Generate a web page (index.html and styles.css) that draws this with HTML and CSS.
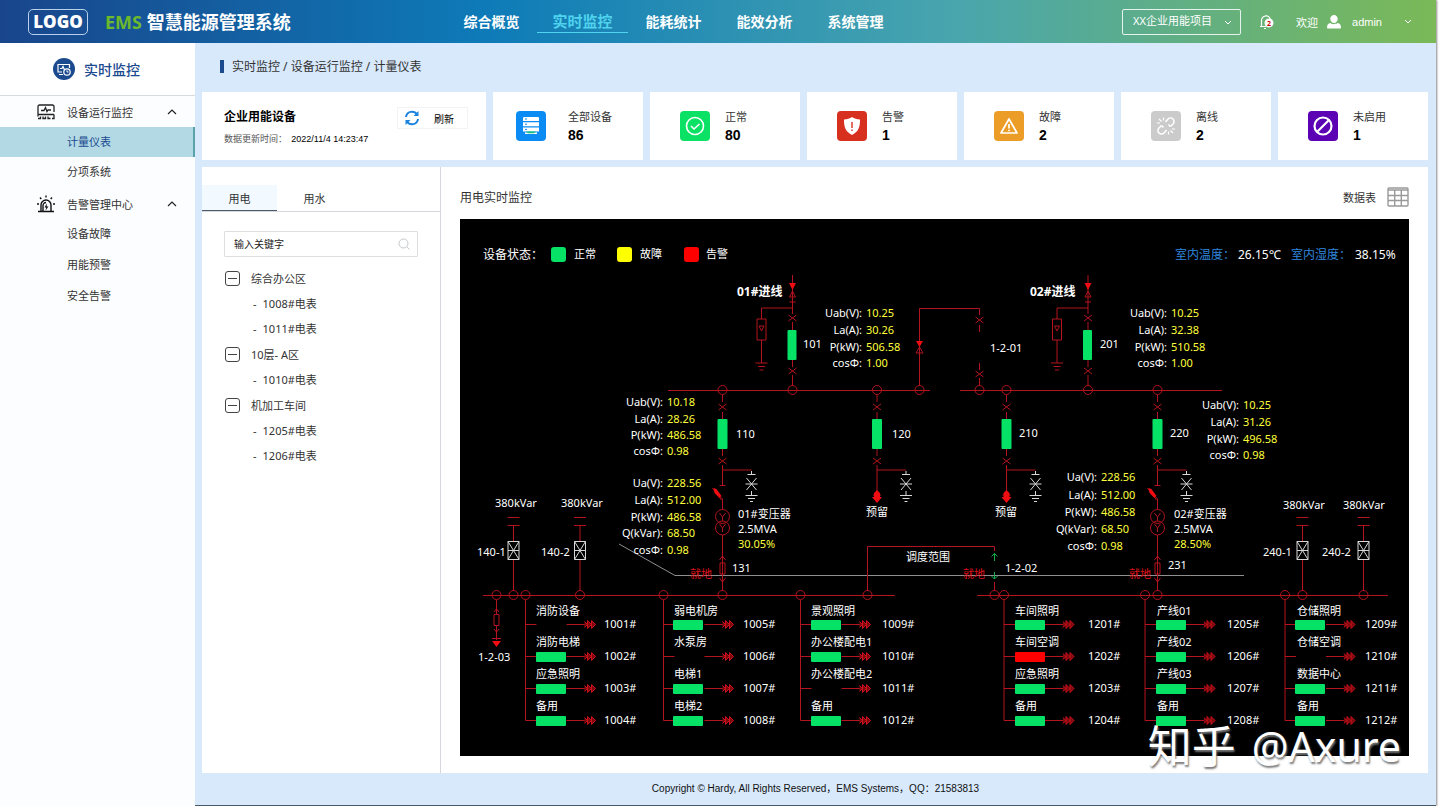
FILE: index.html
```html
<!DOCTYPE html>
<html lang="zh-CN">

    <head>
        <meta charset="UTF-8">
        <title>EMS 智慧能源管理系统</title>
        <link rel="stylesheet" href="styles.css">
    </head>
    <body>
        <div class="page">
            <!-- 顶部导航 -->
            <header class="header">
                <div class="brand">
                    <span class="logo">LOGO</span>
                    <h1><span class="ems">EMS</span> 智慧能源管理系统</h1>
                </div>
                <nav class="nav">
                    <a href="#">综合概览</a>
                    <a href="#" class="active">实时监控</a>
                    <a href="#">能耗统计</a>
                    <a href="#">能效分析</a>
                    <a href="#">系统管理</a>
                </nav>
                <div class="tools">
                    <div class="project">
                        <select aria-label="项目">
                            <option>XX企业用能项目</option>
                        </select>
                        <svg class="chevron" viewBox="0 0 8 6"><path d="M1 1l3 3 3-3" /></svg>
                    </div>
                    <button class="bell" aria-label="消息">
                        <svg width="16" height="16" viewBox="0 0 16 16">
                            <path d="M1 12.500h6M2.500 12.500V7a4.500 4.500 0 0 1 9-1M7 2.500V1M5 14.500h2" fill="none" stroke="#fff" stroke-width="1.200" />
                            <circle cx="10" cy="9" r="4.500" fill="#fff" />
                        </svg>
                        <span class="badge">2</span>
                    </button>
                    <span class="welcome">欢迎</span>
                    <svg class="user" viewBox="0 0 14 14"><path d="M7 0a3.700 3.700 0 0 1 3.700 4C10.700 6.300 9 8 7 8S3.300 6.300 3.300 4A3.700 3.700 0 0 1 7 0zM3.500 8C5 9.600 9 9.600 10.500 8 13 8.500 14 10 14 12.500c0 .7-.5 1-1 1H1c-.5 0-1-.3-1-1C0 10 1 8.500 3.500 8z" fill="#fff" /></svg>
                    <button class="admin">admin
                        <svg class="chevron" viewBox="0 0 8 6"><path d="M1 1l3 3 3-3" /></svg>
                    </button>
                </div>
            </header>

            <div class="body">
                <!-- 左侧菜单 -->
                <aside class="sidebar">
                    <h2>
                        <svg width="22" height="22" viewBox="0 0 22 22">
                            <circle cx="11" cy="11" r="11" fill="#1c4a8f" />
                            <path d="M9 14H5V6.500h11.500V10M6 16.500h4M7 10.500h2l1-2 1.500 3.500" fill="none" stroke="#fff" stroke-width="1.200" />
                            <circle cx="14" cy="14" r="3.200" fill="none" stroke="#fff" stroke-width="1.200" />
                            <path d="M14 12.300V14h1.500" fill="none" stroke="#fff" />
                        </svg>
                        实时监控
                    </h2>
                    <ul class="menu">
                        <li class="group">
                            <svg width="18" height="16" viewBox="0 0 18 16" fill="none" stroke="#222" stroke-width="1.300">
                                <path d="M17 8V2.500a1.500 1.500 0 0 0-1.500-1.500h-13A1.500 1.500 0 0 0 1 2.500v10M1 10.500h16M4 6.500h3l1.500-3 1.500 4 1-1.500h3M1 14.500h2.500v-2M6 12.500v2h2.500v-2M11 12.500v2h2.500M17 10.500v4h-2" />
                            </svg>
                            <a href="#">设备运行监控</a>
                            <svg class="arrow" viewBox="0 0 10 6"><path d="M1 5l4-4 4 4" /></svg>
                        </li>
                        <li class="item active"><a href="#">计量仪表</a></li>
                        <li class="item"><a href="#">分项系统</a></li>
                        <li class="group">
                            <svg width="18" height="18" viewBox="0 0 18 18" fill="none" stroke="#111" stroke-width="1.400">
                                <path d="M1 16.500h16M4 16V10a5 5 0 0 1 10 0v6M6 16v-5.500a3 3 0 0 1 3-3M9 .500v2M3 2.500l1.300 1.500M15 2.500l-1.300 1.500M0 9h2M16 9h2" />
                                <path d="M9.800 8.500L7.500 12.500h1.700L8.500 15.500l3-4H9.700z" fill="#111" stroke="none" />
                            </svg>
                            <a href="#">告警管理中心</a>
                            <svg class="arrow" viewBox="0 0 10 6"><path d="M1 5l4-4 4 4" /></svg>
                        </li>
                        <li class="item"><a href="#">设备故障</a></li>
                        <li class="item"><a href="#">用能预警</a></li>
                        <li class="item"><a href="#">安全告警</a></li>
                    </ul>
                </aside>

                <main class="content">
                    <p class="crumb">实时监控 / 设备运行监控 / 计量仪表</p>

                    <!-- 设备统计 -->
                    <section class="cards">
                        <div class="card summary">
                            <div>
                                <h3>企业用能设备</h3>
                                <p>数据更新时间： <time>2022/11/4 14:23:47</time></p>
                            </div>
                            <button class="refresh">
                                <svg width="16" height="16" viewBox="0 0 16 16" fill="none" stroke="#1b83dd" stroke-width="2">
                                    <path d="M2 7a6 6 0 0 1 11-2.500M14 9A6 6 0 0 1 3 11.500" />
                                    <path d="M14.500 1v5h-5zM1.500 15v-5h5z" fill="#1b83dd" stroke="none" />
                                </svg>
                                刷新
                            </button>
                        </div>
                        <div class="card stat total">
                            <svg class="icon blue" viewBox="0 0 30 30">
                                <path d="M8 6h14a1 1 0 0 1 1 1v3H7V7a1 1 0 0 1 1-1zM7 11.200h16v4H7zM7 16.400h16v4H7zM9 21.600h12v1.400H9z" fill="#fff" />
                                <path d="M9 8h2M9 13.200h2M9 18.400h2" stroke="#0b8cf5" />
                                <path d="M10 20.500h10l-2 1.700h-6z" fill="#16c47c" />
                            </svg>
                            <dl><dt>全部设备</dt><dd>86</dd></dl>
                        </div>
                        <div class="card stat">
                            <svg class="icon green" viewBox="0 0 30 30" fill="none" stroke="#fff" stroke-width="1.600">
                                <circle cx="15" cy="15" r="8.500" /><path d="M11 15l3 3 5.500-5" />
                            </svg>
                            <dl><dt>正常</dt><dd>80</dd></dl>
                        </div>
                        <div class="card stat">
                            <svg class="icon red" viewBox="0 0 30 30">
                                <path d="M15 6c2 1.500 5 2.500 8 2.500 0 7-1 12-8 15.500-7-3.500-8-8.500-8-15.500 3 0 6-1 8-2.500z" fill="#fff" />
                                <path d="M15 11v6M15 18.500v1.500" stroke="#d7301e" stroke-width="1.400" />
                            </svg>
                            <dl><dt>告警</dt><dd>1</dd></dl>
                        </div>
                        <div class="card stat">
                            <svg class="icon orange" viewBox="0 0 30 30" fill="none" stroke="#fff" stroke-width="1.700">
                                <path d="M15 8l8 14H7zM15 13v4.500M15 18.800v1.500" stroke-linejoin="round" />
                            </svg>
                            <dl><dt>故障</dt><dd>2</dd></dl>
                        </div>
                        <div class="card stat">
                            <svg class="icon gray" viewBox="0 0 30 30" fill="none" stroke="#fff" stroke-width="1.600">
                                <path d="M14.500 11l2.500-3a3.500 3.500 0 0 1 5 5l-2.500 2.500M15.500 19L13 22a3.500 3.500 0 0 1-5-5l2.500-2.500M10.500 14.500l2 2M19.500 15.500l-2-2" />
                                <path d="M6 12h3M8 8l2.500 2.500M12.500 6.500v3M17.500 20.500v3M19.500 19.500l2.500 2.500M21 18h3" stroke-width="1.200" />
                            </svg>
                            <dl><dt>离线</dt><dd>2</dd></dl>
                        </div>
                        <div class="card stat">
                            <svg class="icon purple" viewBox="0 0 30 30" fill="none" stroke="#fff" stroke-width="2.200">
                                <circle cx="15" cy="15" r="8.500" /><path d="M9.500 20.500L20.500 9.500" />
                            </svg>
                            <dl><dt>未启用</dt><dd>1</dd></dl>
                        </div>
                    </section>

                    <section class="panel">
                        <!-- 电表树 -->
                        <div class="meters">
                            <div class="tabs">
                                <button class="active">用电</button>
                                <button>用水</button>
                            </div>
                            <div class="search">
                                <input type="text" placeholder="输入关键字" aria-label="输入关键字">
                                <svg width="12" height="12" viewBox="0 0 12 12" fill="none" stroke="#c4c8cc"><circle cx="5.500" cy="5.500" r="4.500" /><path d="M9 9l2.500 2.500" /></svg>
                            </div>
                            <ul class="tree">
                                <li class="branch"><i></i>综合办公区</li>
                                <li>1008#电表</li>
                                <li>1011#电表</li>
                                <li class="branch"><i></i>10层- A区</li>
                                <li>1010#电表</li>
                                <li class="branch"><i></i>机加工车间</li>
                                <li>1205#电表</li>
                                <li>1206#电表</li>
                            </ul>
                        </div>

                        <!-- 一次接线图 -->
                        <div class="monitor">
                            <div class="monitor-head">
                                <h3>用电实时监控</h3>
                                <a href="#">数据表
                                    <svg width="22" height="20" viewBox="0 0 22 20" fill="none" stroke="#999" stroke-width="1.400"><rect x="1" y="1" width="20" height="18" rx="1" /><path d="M1 3h20M1 8.500h20M1 13.500h20M7.700 3v16M14.300 3v16" /></svg>
                                </a>
                            </div>
                            <svg class="diagram" viewBox="460 219 949 537">
                                <defs>
                                    <path id="x" d="M-4-3L4 3M-4 3L4-3" />
                                    <circle id="node" r="4.500" />
                                    <!-- 进线 -->
                                    <g id="incoming">
                                        <path d="M0 275V314M-3 302H3M0 308H-31V319M-35.500 319h9v21h-9zM-31 340V363M-37 363h12M-34.500 366.500h7M-33 370h4M-33.500 326h5l-2.500 5zM0 322V330M0 360V367M0 375V386M-3 297L0 291 3 297z" />
                                        <path class="solid" d="M-3.500 283h7L0 290z" />
                                        <use href="#x" y="318" /><use href="#x" y="371" /><use href="#node" y="390" />
                                        <rect class="on" x="-5" y="330" width="9" height="30" rx="1" />
                                    </g>
                                    <!-- 高压出线 -->
                                    <g id="outgoing">
                                        <path d="M0 395V402M0 412V419M0 449V456M0 465V485M0 470H29" />
                                        <use href="#x" y="407" /><use href="#x" y="461" /><use href="#node" y="390" />
                                        <rect class="on" x="-5" y="419" width="10" height="30" rx="1" />
                                        <path class="white" d="M29 471V474M25 474.500h8M24 478L34 490M34 478L24 490M23 484h12M29 491V495M23 495.500h12M25.500 498.500h7M27.500 501.500h3" />
                                    </g>
                                    <g id="spare">
                                        <path d="M0 485V494M-4 495H4M-4 498H4" />
                                        <path class="solid" d="M-3 493L0 490 3 493V497H5L0 503-5 497H-3z" />
                                    </g>
                                    <!-- 变压器 -->
                                    <g id="transformer">
                                        <path d="M-3 485.500H3M0 509V499L-2 497M-10 488L-1 500M0 535V563M-3 560L0 556 3 560M-2.500 563h5v11h-5zM0 563V591M-3 578L0 582 3 578M0 517V521M-3 513L0 517 3 513M0 528V532M-3 524L0 528 3 524" />
                                        <path class="solid" d="M-9 488L-6 489-1 496-3 498-8 493z" />
                                        <circle cy="516.500" r="7" /><circle cy="528" r="7" />
                                        <use href="#node" y="595" />
                                    </g>
                                    <!-- 电容器 -->
                                    <g id="capacitor">
                                        <path d="M-6 517.500H6M-6 525.500H6M0 526V541M0 560V591" />
                                        <path class="white" d="M-5.500 541.500h11v18h-11zM-5.500 541.500l11 18M5.500 541.500l-11 18M-5.500 550.500h11" />
                                        <use href="#node" y="595" />
                                    </g>
                                    <g id="load">
                                        <path d="M0 0H11M41 0H60" />
                                        <path class="cable" d="M59-3L62 0 59 3M62-4V4L66 0zM66-4V4L70 0z" />
                                    </g>
                                    <!-- 低压馈线 -->
                                    <g id="column">
                                        <use href="#node" y="595" />
                                        <path d="M0 600V720.500" />
                                        <use href="#load" y="624.500" /><use href="#load" y="656.500" /><use href="#load" y="688.500" /><use href="#load" y="720.500" />
                                    </g>
                                    <rect id="sw" width="30" height="10" rx="1" />
                                </defs>

                                <g class="legend">
                                    <text class="lg" x="483" y="259">设备状态：</text>
                                    <rect class="on" x="551" y="247" width="15" height="15" rx="3" /><text x="574" y="258">正常</text>
                                    <rect class="fault" x="617" y="247" width="15" height="15" rx="3" /><text x="640" y="258">故障</text>
                                    <rect class="alarm" x="684" y="247" width="15" height="15" rx="3" /><text x="706" y="258">告警</text>
                                    <text class="lg sky" x="1175" y="259">室内温度：</text><text class="lg" x="1238" y="259">26.15℃</text>
                                    <text class="lg sky" x="1291" y="259">室内湿度：</text><text class="lg" x="1355" y="259">38.15%</text>
                                </g>

                                <g class="wire">
                                    <path d="M668 390.500H930M960 390.500H1222M483 595.500H895M977 595.500H1388" />
                                    <use href="#incoming" x="792.500" /><use href="#incoming" x="1088" />
                                    <use href="#outgoing" x="722.500" /><use href="#outgoing" x="877" /><use href="#outgoing" x="1006.500" /><use href="#outgoing" x="1157.500" />
                                    <use href="#spare" x="877" /><use href="#spare" x="1006.500" />
                                    <!-- 高压母联 -->
                                    <path d="M919.500 386V308.500H979.500V315M979.500 325V332M979.500 363V370M979.500 378V386M916 353L919.500 347 923 353z" />
                                    <path class="solid" d="M916 341h7l-3.500 6z" />
                                    <use href="#x" x="979.500" y="320" /><use href="#x" x="979.500" y="374" />
                                    <use href="#node" x="919.500" y="390" /><use href="#node" x="979.500" y="390" />
                                    <path class="scope" d="M619 544L675 575.500H1244" />
                                    <use href="#transformer" x="722.500" /><use href="#transformer" x="1157.500" />
                                    <use href="#capacitor" x="513.500" /><use href="#capacitor" x="580" /><use href="#capacitor" x="1302.500" /><use href="#capacitor" x="1363.500" />
                                    <!-- 低压母联 -->
                                    <path d="M867.500 591V546.500H994.500V551M994.500 582V591" />
                                    <use href="#node" x="867.500" y="595" /><use href="#node" x="994.500" y="595" />
                                    <path class="tie" d="M994.500 561V553M991.500 556.500l3-3 3 3M994.500 572V579M991.500 576l3 3 3-3" />
                                    <!-- 1-2-03 -->
                                    <use href="#node" x="496.500" y="595" />
                                    <path d="M496.500 600V614M494 612l2.500-3 2.500 3M494 614.500h5v11h-5zM496.500 626V640M494 629l2.500 3 2.500-3M492 638.500h9" />
                                    <path class="solid" d="M492 641h9l-4.500 6z" />
                                    <use href="#column" x="525.500" /><use href="#column" x="663.500" /><use href="#column" x="800.500" />
                                    <use href="#column" x="1004" /><use href="#column" x="1145" /><use href="#column" x="1285" />
                                </g>

                                <g class="on">
                                    <use href="#sw" x="536" y="652" /><use href="#sw" x="536" y="684" /><use href="#sw" x="536" y="716" />
                                    <use href="#sw" x="673" y="620" /><use href="#sw" x="673" y="684" /><use href="#sw" x="673" y="716" />
                                    <use href="#sw" x="811" y="620" /><use href="#sw" x="811" y="652" /><use href="#sw" x="811" y="716" />
                                    <use href="#sw" x="1015" y="620" /><use href="#sw" x="1015" y="684" /><use href="#sw" x="1015" y="716" />
                                    <use href="#sw" x="1156" y="620" /><use href="#sw" x="1156" y="652" /><use href="#sw" x="1156" y="684" /><use href="#sw" x="1156" y="716" />
                                    <use href="#sw" x="1295" y="620" /><use href="#sw" x="1295" y="684" /><use href="#sw" x="1295" y="716" />
                                </g>
                                <g class="alarm"><use href="#sw" x="1015" y="652" /></g>

                                <g class="title"><text x="737" y="296">01#进线</text><text x="1030" y="296">02#进线</text></g>

                                <g class="key">
                                    <text x="862" y="317">Uab(V):</text><text x="862" y="334">La(A):</text><text x="862" y="351">P(kW):</text><text x="862" y="367">cosΦ:</text>
                                    <text x="1167" y="317">Uab(V):</text><text x="1167" y="334">La(A):</text><text x="1167" y="351">P(kW):</text><text x="1167" y="367">cosΦ:</text>
                                    <text x="663" y="406">Uab(V):</text><text x="663" y="423">La(A):</text><text x="663" y="439">P(kW):</text><text x="663" y="455">cosΦ:</text>
                                    <text x="1239" y="409">Uab(V):</text><text x="1239" y="426">La(A):</text><text x="1239" y="443">P(kW):</text><text x="1239" y="459">cosΦ:</text>
                                    <text x="663" y="487">Ua(V):</text><text x="663" y="504">La(A):</text><text x="663" y="521">P(kW):</text><text x="663" y="537">Q(kVar):</text><text x="663" y="554">cosΦ:</text>
                                    <text x="1097" y="481">Ua(V):</text><text x="1097" y="499">La(A):</text><text x="1097" y="516">P(kW):</text><text x="1097" y="533">Q(kVar):</text><text x="1097" y="550">cosΦ:</text>
                                </g>
                                <g class="val">
                                    <text x="866" y="317">10.25</text><text x="866" y="334">30.26</text><text x="866" y="351">506.58</text><text x="866" y="367">1.00</text>
                                    <text x="1171" y="317">10.25</text><text x="1171" y="334">32.38</text><text x="1171" y="351">510.58</text><text x="1171" y="367">1.00</text>
                                    <text x="667" y="406">10.18</text><text x="667" y="423">28.26</text><text x="667" y="439">486.58</text><text x="667" y="455">0.98</text>
                                    <text x="1243" y="409">10.25</text><text x="1243" y="426">31.26</text><text x="1243" y="443">496.58</text><text x="1243" y="459">0.98</text>
                                    <text x="667" y="487">228.56</text><text x="667" y="504">512.00</text><text x="667" y="521">486.58</text><text x="667" y="537">68.50</text><text x="667" y="554">0.98</text>
                                    <text x="1101" y="481">228.56</text><text x="1101" y="499">512.00</text><text x="1101" y="516">486.58</text><text x="1101" y="533">68.50</text><text x="1101" y="550">0.98</text>
                                    <text x="738" y="548">30.05%</text><text x="1174" y="548">28.50%</text>
                                </g>
                                <g class="local"><text x="690" y="578">就地</text><text x="963" y="578">就地</text><text x="1129" y="578">就地</text></g>

                                <g class="label">
                                    <text x="803" y="348">101</text><text x="1100" y="348">201</text><text x="990" y="352">1-2-01</text>
                                    <text x="736" y="438">110</text><text x="892" y="438">120</text><text x="1019" y="437">210</text><text x="1170" y="437">220</text>
                                    <text x="866" y="516">预留</text><text x="995" y="516">预留</text>
                                    <text x="738" y="518">01#变压器</text><text x="738" y="533">2.5MVA</text>
                                    <text x="1174" y="518">02#变压器</text><text x="1174" y="533">2.5MVA</text>
                                    <text x="732" y="572">131</text><text x="1168" y="569">231</text>
                                    <text x="906" y="561">调度范围</text><text x="1005" y="572">1-2-02</text><text x="478" y="661">1-2-03</text>
                                    <text x="495" y="507">380kVar</text><text x="561" y="507">380kVar</text><text x="1283" y="509">380kVar</text><text x="1343" y="509">380kVar</text>
                                    <text x="477" y="556">140-1</text><text x="541" y="556">140-2</text><text x="1263" y="556">240-1</text><text x="1322" y="556">240-2</text>

                                    <text x="536" y="615">消防设备</text><text x="536" y="646">消防电梯</text><text x="536" y="678">应急照明</text><text x="536" y="710">备用</text>
                                    <text x="604" y="628">1001#</text><text x="604" y="660">1002#</text><text x="604" y="692">1003#</text><text x="604" y="724">1004#</text>
                                    <text x="674" y="615">弱电机房</text><text x="674" y="646">水泵房</text><text x="674" y="678">电梯1</text><text x="674" y="710">电梯2</text>
                                    <text x="743" y="628">1005#</text><text x="743" y="660">1006#</text><text x="743" y="692">1007#</text><text x="743" y="724">1008#</text>
                                    <text x="811" y="615">景观照明</text><text x="811" y="646">办公楼配电1</text><text x="811" y="678">办公楼配电2</text><text x="811" y="710">备用</text>
                                    <text x="882" y="628">1009#</text><text x="882" y="660">1010#</text><text x="882" y="692">1011#</text><text x="882" y="724">1012#</text>
                                    <text x="1015" y="615">车间照明</text><text x="1015" y="646">车间空调</text><text x="1015" y="678">应急照明</text><text x="1015" y="710">备用</text>
                                    <text x="1088" y="628">1201#</text><text x="1088" y="660">1202#</text><text x="1088" y="692">1203#</text><text x="1088" y="724">1204#</text>
                                    <text x="1157" y="615">产线01</text><text x="1157" y="646">产线02</text><text x="1157" y="678">产线03</text><text x="1157" y="710">备用</text>
                                    <text x="1227" y="628">1205#</text><text x="1227" y="660">1206#</text><text x="1227" y="692">1207#</text><text x="1227" y="724">1208#</text>
                                    <text x="1297" y="615">仓储照明</text><text x="1297" y="646">仓储空调</text><text x="1297" y="678">数据中心</text><text x="1297" y="710">备用</text>
                                    <text x="1365" y="628">1209#</text><text x="1365" y="660">1210#</text><text x="1365" y="692">1211#</text><text x="1365" y="724">1212#</text>
                                </g>
                            </svg>
                            <div class="watermark"><span>知乎</span><span>@Axure</span></div>
                        </div>
                    </section>

                    <footer class="footer">Copyright © Hardy, All Rights Reserved，EMS Systems，QQ：21583813</footer>
                </main>
            </div>
        </div>
    </body>

</html>
```
FILE: styles.css
```css
* {
    margin: 0;
    padding: 0;
    box-sizing: border-box;
}

body {
    background-color: #fff;
    font-family: "Noto Sans", "Noto Sans CJK SC", sans-serif;
    font-size: 11px;
    color: #333;
}

ul {
    list-style: none;
}

a {
    color: inherit;
    text-decoration: none;
}

button,
select,
input {
    font: inherit;
    color: inherit;
    border: none;
    background: none;
}

button {
    cursor: pointer;
}

.page {
    display: flex;
    flex-direction: column;
    min-height: 100vh;
    margin-right: 4px;
    box-shadow: 1px 0 2px #888;
}

/* 顶部 */
.header {
    display: flex;
    align-items: center;
    height: 43px;
    color: #fff;
    background: linear-gradient(90deg, #19458b 0%, #0e7bb8 34%, #48a5ae 66%, #7bb957 100%);
}

.brand {
    flex: none;
    display: flex;
    align-items: center;
    gap: 17px;
    width: 446px;
    padding-left: 28px;
}

.logo {
    width: 60px;
    height: 26px;
    line-height: 24px;
    border: 1px solid #b9d0ea;
    border-radius: 5px;
    font-family: "Open Sans", sans-serif;
    font-size: 17px;
    font-weight: 800;
    text-align: center;
}

.brand h1 {
    font-size: 18px;
    line-height: 24px;
    white-space: nowrap;
}

.ems {
    color: #6cb92d;
}

.nav {
    display: flex;
    height: 22px;
}

.nav a {
    width: 91px;
    line-height: 21px;
    font-size: 14px;
    font-weight: bold;
    text-align: center;
}

.nav .active {
    font-size: 15px;
    color: #4fd3ee;
    border-bottom: 1px solid #4fd3ee;
}

.tools {
    display: flex;
    align-items: center;
    margin-left: auto;
    padding-right: 24px;
}

.project {
    position: relative;
    width: 119px;
    height: 26px;
    border: 1px solid #e6f2ee;
    border-radius: 2px;
}

.project select {
    appearance: none;
    width: 100%;
    height: 22px;
    padding-left: 10px;
}

.chevron {
    width: 8px;
    height: 6px;
    fill: none;
    stroke: #fff;
}

.project .chevron {
    position: absolute;
    right: 8px;
    top: 10px;
    pointer-events: none;
}

.bell {
    position: relative;
    width: 16px;
    height: 16px;
    margin: 0 21px 0 18px;
}

.badge {
    position: absolute;
    left: 6px;
    top: 5px;
    width: 8px;
    line-height: 9px;
    font-size: 7px;
    font-weight: bold;
    color: #c00;
}

.user {
    width: 14px;
    height: 14px;
    margin: 0 11px 0 9px;
}

.admin {
    display: flex;
    align-items: center;
    gap: 22px;
    font-family: "Liberation Sans", sans-serif;
}

/* 左侧菜单 */
.body {
    flex: 1;
    display: flex;
}

.sidebar {
    flex: none;
    width: 195px;
    background-color: #fcfdff;
}

.sidebar h2 {
    display: flex;
    align-items: center;
    gap: 9px;
    height: 53px;
    padding-left: 53px;
    background-color: #fff;
    border-bottom: 1px solid #d5dade;
    font-size: 14px;
    font-weight: 500;
    color: #1c4a8f;
}

.menu .group {
    display: flex;
    align-items: center;
    height: 31px;
    padding: 0 18px 0 37px;
}

.group a {
    margin-left: 12px;
}

.arrow {
    width: 10px;
    height: 6px;
    margin-left: auto;
    fill: none;
    stroke: #222;
    stroke-width: 1.2;
}

.menu .item {
    height: 31px;
    line-height: 30px;
    padding-left: 67px;
}

.menu .active {
    height: 30px;
    line-height: 29px;
    color: #1c4a8f;
    background-color: #b2d9e4;
    border-right: 2px solid #5ba3ab;
}

/* 内容区 */
.content {
    flex: 1;
    display: flex;
    flex-direction: column;
    min-width: 0;
    padding: 0 8px 0 7px;
    background-color: #d8e9fc;
}

.crumb {
    height: 13px;
    margin: 17px 0 19px 18px;
    padding-left: 8px;
    border-left: 4px solid #1c4a8f;
    font-size: 12px;
    line-height: 14px;
}

.cards {
    display: grid;
    grid-template-columns: 284fr repeat(6, 150fr);
    gap: 7px;
}

.card {
    display: flex;
    height: 68px;
    background-color: #fff;
}

.summary {
    justify-content: space-between;
    padding: 15px 18px 0 22px;
    white-space: nowrap;
}

.summary h3 {
    font-size: 12px;
    line-height: 20px;
    color: #000;
}

.summary p {
    font-size: 9px;
    line-height: 24px;
    color: #555;
}

.summary time {
    margin-left: 2px;
    font-family: "Liberation Sans", sans-serif;
    color: #000;
}

.refresh {
    display: flex;
    align-items: center;
    gap: 14px;
    width: 71px;
    height: 22px;
    padding-left: 6px;
    border: 1px solid #f1f3f5;
    font-size: 10px;
    color: #000;
}

.stat {
    gap: 15px;
    padding: 16px 0 0 30px;
}

.stat.total {
    gap: 22px;
    padding-left: 23px;
}

.icon {
    width: 30px;
    height: 30px;
    margin-top: 3px;
    border-radius: 4px;
}

.blue {
    background-color: #0b8cf5;
}

.green {
    background-color: #0be165;
}

.red {
    background-color: #d7301e;
}

.orange {
    background-color: #ec9d27;
}

.gray {
    background-color: #cbcbcb;
}

.purple {
    background-color: #5b02b5;
}

.stat dt {
    line-height: 18px;
}

.stat dd {
    font-family: "Liberation Sans", sans-serif;
    font-size: 14px;
    font-weight: bold;
    line-height: 18px;
    color: #000;
}

.panel {
    flex: 1;
    display: flex;
    margin-top: 7px;
    background-color: #fff;
}

/* 电表 */
.meters {
    flex: none;
    width: 239px;
    padding-top: 18px;
    border-right: 1px solid #d4d8dc;
}

.tabs {
    display: flex;
    border-bottom: 1px solid #d4d8dc;
}

.tabs button {
    width: 75px;
    height: 26px;
}

.tabs .active {
    background-color: #f2f9ff;
    border-bottom: 1px solid #4f5b68;
}

.search {
    position: relative;
    margin: 19px 22px 8px 22px;
}

.search input {
    width: 100%;
    height: 26px;
    padding: 0 28px 0 9px;
    border: 1px solid #dcdfe2;
    border-radius: 1px;
    font-size: 10px;
}

.search input::placeholder {
    color: #222;
}

.search svg {
    position: absolute;
    right: 8px;
    top: 7px;
}

.tree li {
    height: 25px;
    line-height: 25px;
    padding-left: 51px;
}

.tree li::before {
    content: "-";
    margin-right: 6px;
}

.tree .branch {
    display: flex;
    align-items: center;
    gap: 11px;
    height: 26px;
    padding-left: 23px;
}

.tree .branch::before {
    display: none;
}

.branch i {
    display: flex;
    align-items: center;
    width: 15px;
    height: 15px;
    padding: 0 2px;
    border: 1px solid #444;
    border-radius: 3px;
}

.branch i::before {
    content: "";
    flex: 1;
    height: 1px;
    background-color: #444;
}

/* 接线图 */
.monitor {
    position: relative;
    flex: 1;
    min-width: 0;
    padding: 0 19px 16px;
}

.monitor-head {
    display: flex;
    align-items: center;
    justify-content: space-between;
    height: 52px;
    padding-top: 8px;
}

.monitor-head h3 {
    font-size: 12px;
    font-weight: normal;
}

.monitor-head a {
    display: flex;
    align-items: center;
    gap: 11px;
}

.diagram {
    display: block;
    width: 100%;
    background-color: #000;
    font-size: 11px;
    fill: #fff;
}

.wire {
    fill: none;
    stroke: #b3141f;
}

.solid {
    fill: #f00d12;
    stroke: none;
}

.cable {
    fill: #7a0a10;
    stroke: #d01018;
}

.white {
    stroke: #d8d8d8;
}

.scope {
    stroke: #8f8f8f;
}

.tie {
    stroke: #18b04c;
}

.on {
    fill: #05e266;
    stroke: none;
}

.fault {
    fill: #ff0;
}

.alarm {
    fill: #f00;
}

.lg {
    font-size: 12px;
}

.sky {
    fill: #2f86dd;
}

.title {
    font-size: 12px;
    font-weight: bold;
}

.key {
    text-anchor: end;
}

.val {
    fill: #ffff3c;
}

.local {
    fill: #e0101a;
}

.watermark {
    display: flex;
    gap: 16px;
    position: absolute;
    right: 27px;
    bottom: 0;
    font-size: 41px;
    line-height: 54px;
    color: #fff;
    text-shadow: 1px 2px 2px #777;
    white-space: nowrap;
}

.watermark span:first-child {
    font-size: 44px;
}

.footer {
    height: 33px;
    line-height: 32px;
    margin: 0 -8px 0 -7px;
    border-bottom: 1px solid #45596b;
    font-family: "Liberation Sans", "Noto Sans CJK SC", sans-serif;
    font-size: 10px;
    color: #111;
    text-align: center;
}
```
